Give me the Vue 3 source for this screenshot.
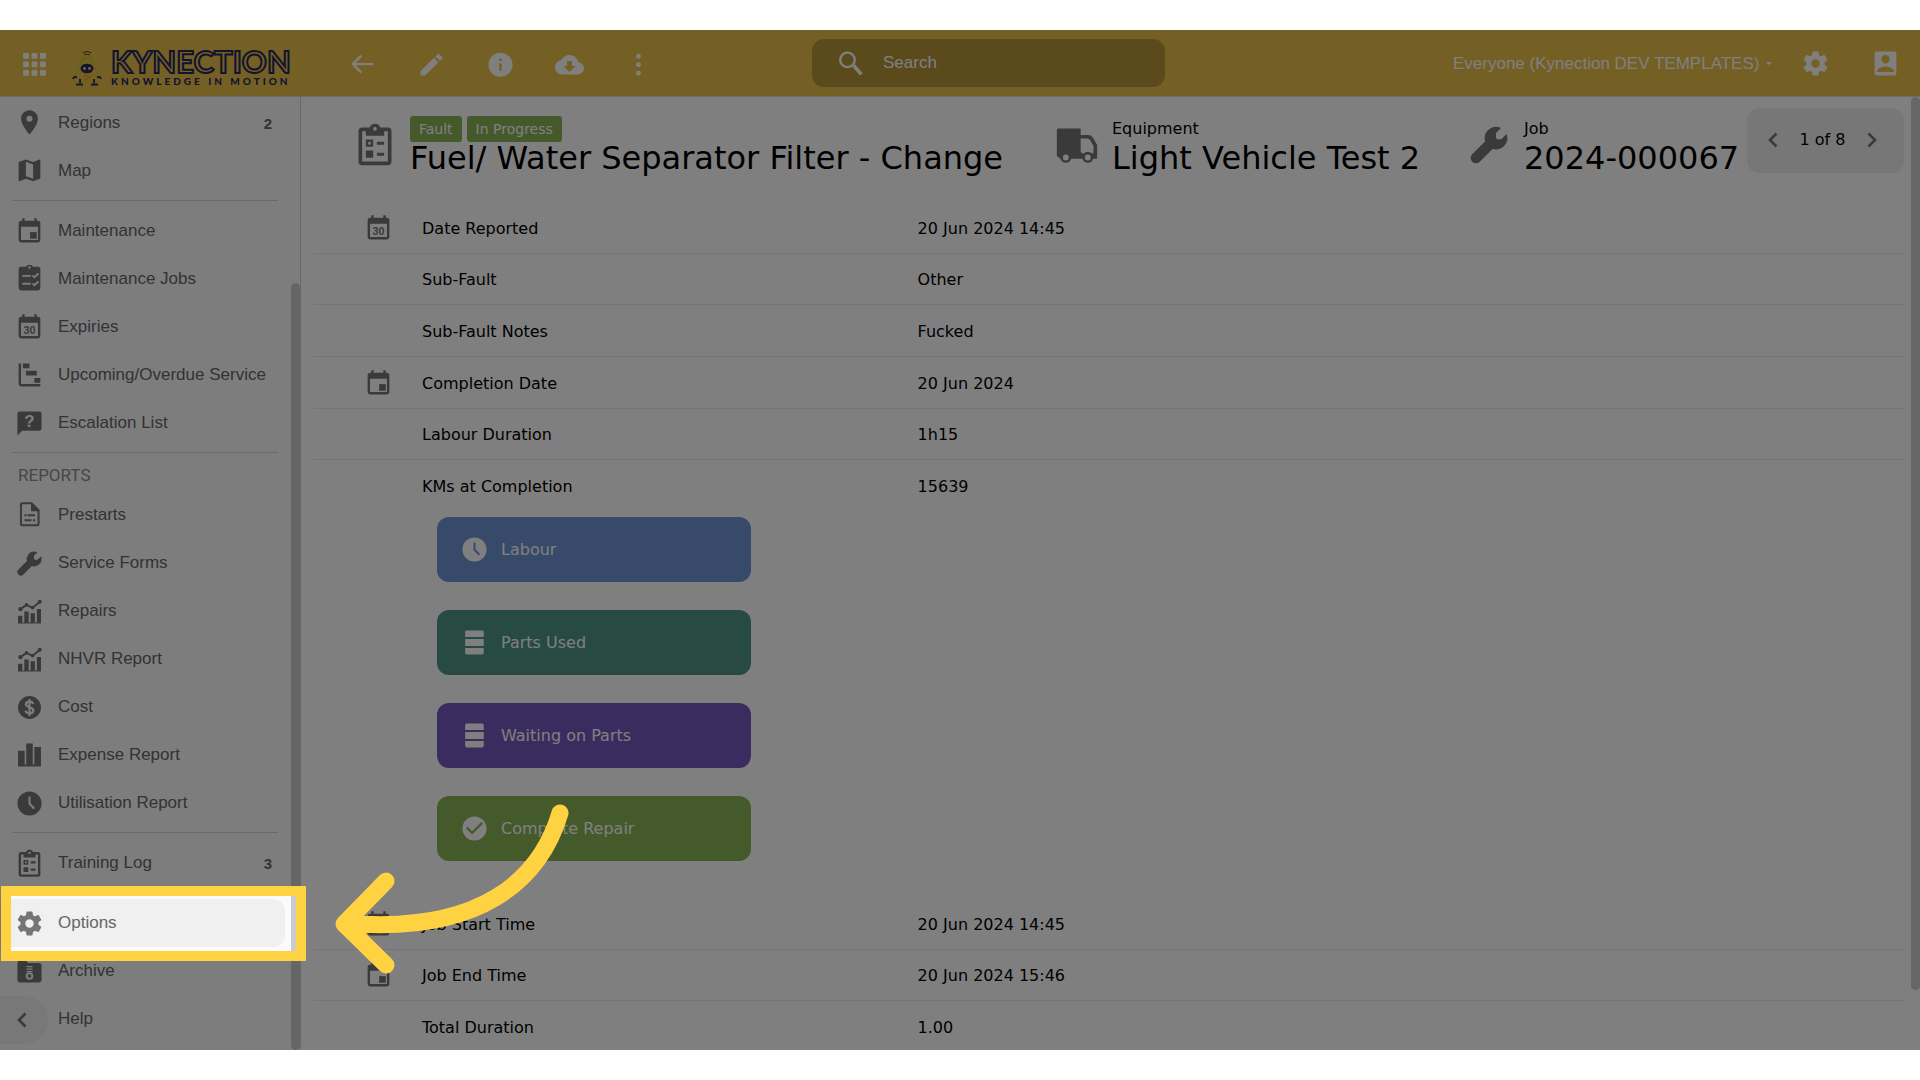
<script setup>
import { h } from 'vue'

const wrench = '<path d="M18.600 2.700A6.200 6.200 0 1 0 21.600 6l-3 2.900h-2.100l-.7-.7V5.400z"/><path d="M4.900 19.100 13 11" stroke="currentColor" stroke-width="5.800" stroke-linecap="round"/>'
const calendar = '<path fill-rule="evenodd" d="M6 1h2v2h8V1h2v2h1a2 2 0 0 1 2 2v14a2 2 0 0 1-2 2H5a2 2 0 0 1-2-2V5a2 2 0 0 1 2-2h1zM5 8v11h14V8z"/>'
const clipboard = '<path fill-rule="evenodd" d="M9 2.500a3.200 3.200 0 0 1 6 0h4a2 2 0 0 1 2 2V21a2 2 0 0 1-2 2H5a2 2 0 0 1-2-2V4.500a2 2 0 0 1 2-2zM5 4.500V21h14V4.500h-2V7H7V4.500zM12 2.200a1 1 0 1 0 0 2 1 1 0 0 0 0-2zM7 9h4v4H7zM8.300 10.300v1.400h1.400v-1.400zM13 10.200h4v1.700h-4zM7 15h4v4H7zM13 16.200h4v1.700h-4z"/>'
const chart = '<path d="M2.500 15.500h3.600V22H2.500zM7.700 12h3.600v10H7.700zM12.900 13.500h3.600V22h-3.600zM18.100 10h3.400v12h-3.400zM2.500 21h19v1h-19z"/><path d="M4.500 10 9.500 6.500l5 2.500 6-5" fill="none" stroke="currentColor" stroke-width="1.600"/><circle cx="4.500" cy="10" r="1.800"/><circle cx="9.500" cy="6.500" r="1.500"/><circle cx="14.500" cy="8.800" r="1.500"/><circle cx="20.500" cy="4" r="1.700"/>'
const clock = '<path fill-rule="evenodd" d="M12 0a12 12 0 1 0 0 24 12 12 0 0 0 0-24zM11 5h2v6.800l4.500 4.700-1.500 1.400-5-5.300z" transform="translate(2 2) scale(.833)"/>'
const gear = '<path d="M12 15.500a3.500 3.500 0 1 1 0-7 3.500 3.500 0 0 1 0 7m7.430-2.530c.04-.32.07-.64.07-.97s-.03-.66-.07-1l2.110-1.630c.19-.15.24-.42.12-.64l-2-3.460c-.12-.22-.39-.31-.61-.22l-2.490 1c-.52-.39-1.060-.73-1.690-.98l-.37-2.650A.506.506 0 0 0 14 2h-4c-.25 0-.46.18-.5.42l-.37 2.650c-.63.25-1.170.59-1.690.98l-2.490-1c-.22-.09-.49 0-.61.22l-2 3.460c-.13.22-.07.49.12.64L4.570 11c-.04.34-.07.67-.07 1s.03.65.07.97l-2.110 1.660c-.19.15-.25.42-.12.64l2 3.460c.12.22.39.3.61.22l2.490-1.010c.52.4 1.060.74 1.690.99l.37 2.650c.04.24.25.42.5.42h4c.25 0 .46-.18.5-.42l.37-2.650c.63-.26 1.170-.59 1.690-.99l2.490 1.010c.22.08.49 0 .61-.22l2-3.460c.12-.22.07-.49-.12-.64z"/>'

const icons = {
  wrench,
  clipboard,
  chart,
  clock,
  gear,
  pin: '<path d="M12 2C8.130 2 5 5.130 5 9c0 5.250 7 13 7 13s7-7.750 7-13c0-3.870-3.130-7-7-7zm0 9.500a2.500 2.500 0 1 1 0-5 2.500 2.500 0 0 1 0 5z" transform="translate(0 -1)"/>',
  map: '<path d="M20.500 3l-.16.03L15 5.100 9 3 3.360 4.900c-.21.07-.36.25-.36.48V20.500c0 .28.22.5.5.5l.16-.03L9 18.900l6 2.100 5.640-1.900c.21-.07.36-.25.36-.48V3.500c0-.28-.22-.5-.5-.5zM15 19l-6-2.110V5l6 2.110V19z" transform="translate(0 -1)"/>',
  event: calendar + '<path d="M12.500 12.500H18V18h-5.500z"/>',
  date: calendar + '<text x="12" y="17" text-anchor="middle" font-family="Liberation Sans, sans-serif" font-weight="700" font-size="9">30</text>',
  tasks: '<path fill-rule="evenodd" d="M9.200 2.500a3 3 0 0 1 5.600 0H19a2 2 0 0 1 2 2V20a2 2 0 0 1-2 2H5a2 2 0 0 1-2-2V4.500a2 2 0 0 1 2-2zM12 2a1 1 0 1 0 0 2 1 1 0 0 0 0-2zM6 9.200v1.600h7V9.200zM6 15.700v1.600h7v-1.600zM14 10.200l2 2 4-3.500-1-1.200-3 2.600-1-1zM14 16.700l2 2 4-3.500-1-1.200-3 2.600-1-1z" transform="translate(0 -1)"/>',
  gantt: '<path d="M3 2h2v17h16v2H5a2 2 0 0 1-2-2zM6.500 2H12v4H6.500zM9 8h9v4H9zM16 14h5v4h-5z"/>',
  question: '<path d="M4 2h16a2 2 0 0 1 2 2v12a2 2 0 0 1-2 2H6l-4 4V4a2 2 0 0 1 2-2z"/><text x="12" y="15" text-anchor="middle" font-family="Liberation Sans, sans-serif" font-weight="700" font-size="14" fill="#fbfbfd">?</text>',
  file: '<path fill-rule="evenodd" d="M4.500 0h10L22 7.500V22a2 2 0 0 1-2 2H4.500a2 2 0 0 1-2-2V2a2 2 0 0 1 2-2zM4.500 2v20H20V9h-6.500V2zM7 12h2v2H7zM10 12h7.500v2H10zM7 17h7v2H7zM15.500 17h2v2h-2z" transform="translate(2 1) scale(.833)"/>',
  dollar: '<circle cx="12" cy="12" r="9.500"/><path d="M15 9c-.4-1.200-1.500-1.800-3-1.800-1.800 0-3 .9-3 2.200 0 3.200 6.200 1.700 6.200 5 0 1.500-1.400 2.400-3.200 2.400-1.700 0-2.900-.8-3.300-2.100M12 5v14" fill="none" stroke="#fbfbfd" stroke-width="1.800"/>',
  bars: '<path d="M2.500 9H8v13H2.500zM9.300 3h5.400v19H9.300zM16 6h5.500v16H16zM2.500 20.500h19V22h-19z" transform="translate(0 -1)"/>',
  archive: '<path d="M4 3h5l2 2h9a2 2 0 0 1 2 2v12a2 2 0 0 1-2 2H4a2 2 0 0 1-2-2V5a2 2 0 0 1 2-2z"/><path d="M9.500 8h5M9.500 10h5M9.500 12h5" stroke="#fbfbfd" stroke-width="1"/><circle cx="12" cy="15.800" r="2.300" fill="none" stroke="#fbfbfd" stroke-width="1.600"/>',
  truck: '<path fill-rule="evenodd" d="M1.500 3H14v3.500h4c1.300 0 2 .4 2.700 1.500L23 12v7.500h-2.200a3 3 0 0 1-5.800 0H8.800a3 3 0 0 1-5.800 0L1 18V4zM14 8.500v7.300l1.500 1a3 3 0 0 1 4.700 0l.8-.8v-3.500L19 9.200l-1.200-.7zM5.900 17.200a1.600 1.600 0 1 0 0 3.200 1.600 1.600 0 0 0 0-3.200zM17.900 17.200a1.600 1.600 0 1 0 0 3.200 1.600 1.600 0 0 0 0-3.200z"/>',
  apps: '<path d="M3 3h4v4H3zM10 3h4v4h-4zM17 3h4v4h-4zM3 10h4v4H3zM10 10h4v4h-4zM17 10h4v4h-4zM3 17h4v4H3zM10 17h4v4h-4zM17 17h4v4h-4z" stroke="currentColor" stroke-width=".8" stroke-linejoin="round" transform="translate(0 .7)"/>',
  back: '<path d="M21 12.500H4M11 5.500l-7 7 7 7" fill="none" stroke="currentColor" stroke-width="2"/>',
  pencil: '<path d="M3 17.250V21h3.750L17.810 9.940l-3.750-3.750L3 17.250zM20.710 7.040a1 1 0 0 0 0-1.410l-2.340-2.340a1 1 0 0 0-1.410 0l-1.830 1.830 3.750 3.750z" transform="translate(0 1)"/>',
  info: '<path fill-rule="evenodd" d="M12 2a10 10 0 1 0 0 20 10 10 0 0 0 0-20zM11 7h2v2h-2zM11 11h2v6h-2z" transform="translate(0 1)"/>',
  cloud: '<path d="M19.350 10.040A7.490 7.490 0 0 0 12 4C9.110 4 6.600 5.640 5.350 8.040A5.994 5.994 0 0 0 0 14c0 3.310 2.690 6 6 6h13c2.760 0 5-2.240 5-5 0-2.640-2.050-4.780-4.650-4.960zM17 13l-5 5-5-5h3V9h4v4z" transform="translate(0 1)"/>',
  dots: '<circle cx="12" cy="6" r="2"/><circle cx="12" cy="13" r="2"/><circle cx="12" cy="20" r="2"/>',
  search: '<circle cx="9.500" cy="9" r="6" fill="none" stroke="currentColor" stroke-width="2"/><path d="M14.500 13.500l6.500 7.500" stroke="currentColor" stroke-width="3"/>',
  account: '<path fill-rule="evenodd" d="M5 2h14a2 2 0 0 1 2 2v16a2 2 0 0 1-2 2H5a2 2 0 0 1-2-2V4a2 2 0 0 1 2-2zM12 5a3.500 3.500 0 1 0 0 7 3.500 3.500 0 0 0 0-7zM5 18.500V19h14v-.5c0-2.400-4.600-4-7-4s-7 1.600-7 4z"/>',
  left: '<path d="M15.500 5.500 9 12l6.500 6.500" fill="none" stroke="currentColor" stroke-width="2.600"/>',
  right: '<path d="M8.500 5.500 15 12l-6.500 6.500" fill="none" stroke="currentColor" stroke-width="2.600"/>',
  stack: '<path d="M3.700 0h14.600A1.700 1.700 0 0 1 20 1.700V6.500H1.500V1.700A1.700 1.700 0 0 1 3.700 0zM1.500 8.500H20v7H1.500zM1.500 17.500H20v4.800a1.700 1.700 0 0 1-1.700 1.700H3.200a1.700 1.700 0 0 1-1.700-1.700z" transform="translate(3 2) scale(.833)"/>',
  check: '<path fill-rule="evenodd" d="M12 2a10 10 0 1 0 0 20 10 10 0 0 0 0-20zM10 17l-5-5 1.400-1.400 3.600 3.600 7.600-7.600L19 8z"/>',
}

const Icon = (props) =>
  h('svg', { class: 'icon', viewBox: '0 0 24 24', 'aria-hidden': 'true', innerHTML: icons[props.name] })
Icon.props = ['name']

const groups = [
  { items: [{ icon: 'pin', label: 'Regions', count: 2 }, { icon: 'map', label: 'Map' }] },
  {
    items: [
      { icon: 'event', label: 'Maintenance' },
      { icon: 'tasks', label: 'Maintenance Jobs' },
      { icon: 'date', label: 'Expiries' },
      { icon: 'gantt', label: 'Upcoming/Overdue Service' },
      { icon: 'question', label: 'Escalation List' },
    ],
  },
  {
    title: 'REPORTS',
    items: [
      { icon: 'file', label: 'Prestarts' },
      { icon: 'wrench', label: 'Service Forms' },
      { icon: 'chart', label: 'Repairs' },
      { icon: 'chart', label: 'NHVR Report' },
      { icon: 'dollar', label: 'Cost' },
      { icon: 'bars', label: 'Expense Report' },
      { icon: 'clock', label: 'Utilisation Report' },
    ],
  },
  { items: [{ icon: 'clipboard', label: 'Training Log', count: 3 }] },
  {
    items: [
      { icon: 'gear', label: 'Options', active: true },
      { icon: 'archive', label: 'Archive' },
      { label: 'Help' },
    ],
  },
]

const tools = [
  { icon: 'back', label: 'Back' },
  { icon: 'pencil', label: 'Edit' },
  { icon: 'info', label: 'Info' },
  { icon: 'cloud', label: 'Download' },
  { icon: 'dots', label: 'More' },
]

const details = [
  { icon: 'date', label: 'Date Reported', value: '20 Jun 2024 14:45' },
  { label: 'Sub-Fault', value: 'Other' },
  { label: 'Sub-Fault Notes', value: 'Fucked' },
  { icon: 'event', label: 'Completion Date', value: '20 Jun 2024' },
  { label: 'Labour Duration', value: '1h15' },
  { label: 'KMs at Completion', value: '15639' },
]

const times = [
  { icon: 'event', label: 'Job Start Time', value: '20 Jun 2024 14:45' },
  { icon: 'event', label: 'Job End Time', value: '20 Jun 2024 15:46' },
  { label: 'Total Duration', value: '1.00' },
]

const actions = [
  { icon: 'clock', label: 'Labour', tone: 'blue' },
  { icon: 'stack', label: 'Parts Used', tone: 'teal' },
  { icon: 'stack', label: 'Waiting on Parts', tone: 'purple' },
  { icon: 'check', label: 'Complete Repair', tone: 'green' },
]
</script>

<template>
  <div class="app">
    <header class="topbar">
      <button class="tool apps" aria-label="Apps"><Icon name="apps" /></button>
      <a class="brand" href="#">
        <svg class="robot" viewBox="0 0 30 36" aria-hidden="true">
          <path d="M11 3q4-3 8 0M12.500 5q2.500-2 5 0" fill="none" stroke="#4a4a3c" stroke-width="1.200" />
          <path d="M8 6l5 1.500M22 6l-5 1.500" stroke="#f0b838" stroke-width="1.500" />
          <path d="M8 17a7 8 0 0 1 14 0l3 7-4 7H9l-4-7z" fill="#ecc040" />
          <path d="M8 15q1-6 7-7 6 1 7 7" fill="none" stroke="#b8c83c" stroke-width="2" />
          <path d="M7 18l-4 8M23 18l4 8" stroke="#b8c83c" stroke-width="1.500" />
          <ellipse cx="15" cy="18.500" rx="6.500" ry="4.800" fill="#252860" />
          <circle cx="12.500" cy="18.500" r="1.400" fill="#e8d070" />
          <circle cx="17.500" cy="18.500" r="1.400" fill="#e8d070" />
          <path d="M12 25l6 2-5 3" fill="none" stroke="#e4a038" stroke-width="1.500" />
          <path d="M1 29q1-3 4-1.500M29 29q-1-3-4-1.500M8 29v4M22 29v4M4 34.500h7M19 34.500h7" fill="none" stroke="#252860" stroke-width="1.800" />
        </svg>
        <span class="wordmark">
          <span class="name">KYNECTION</span>
          <span class="tagline">KNOWLEDGE IN MOTION</span>
        </span>
      </a>
      <div class="tools">
        <button v-for="t in tools" :key="t.label" class="tool" :aria-label="t.label"><Icon :name="t.icon" /></button>
      </div>
      <label class="search">
        <Icon name="search" />
        <input type="search" placeholder="Search" aria-label="Search" />
      </label>
      <div class="account">
        <label class="scope">
          <select aria-label="Group">
            <option>Everyone (Kynection DEV TEMPLATES)</option>
          </select>
          <span class="caret"></span>
        </label>
        <div class="account-tools">
          <button class="tool" aria-label="Settings"><Icon name="gear" /></button>
          <button class="tool" aria-label="Profile"><Icon name="account" /></button>
        </div>
      </div>
    </header>

    <div class="body">
      <nav class="sidebar">
        <section v-for="(g, i) in groups" :key="i" class="group">
          <h2 v-if="g.title">{{ g.title }}</h2>
          <a v-for="item in g.items" :key="item.label" href="#" class="item" :class="{ active: item.active }">
            <Icon v-if="item.icon" :name="item.icon" />
            <span v-else class="icon"></span>
            <span>{{ item.label }}</span>
            <b v-if="item.count">{{ item.count }}</b>
            <span v-if="item.active" class="spotlight"></span>
          </a>
        </section>
        <button class="collapse" aria-label="Collapse menu"><Icon name="left" /></button>
        <span class="thumb"></span>
      </nav>

      <main class="main">
        <div class="summary">
          <div class="fact">
            <Icon name="clipboard" />
            <div>
              <p class="badges"><span>Fault</span><span>In Progress</span></p>
              <h1>Fuel/ Water Separator Filter - Change</h1>
            </div>
          </div>
          <div class="fact">
            <Icon name="truck" />
            <div>
              <p>Equipment</p>
              <h1>Light Vehicle Test 2</h1>
            </div>
          </div>
          <div class="fact">
            <Icon name="wrench" />
            <div>
              <p>Job</p>
              <h1>2024-000067</h1>
            </div>
          </div>
          <div class="pager">
            <button aria-label="Previous"><Icon name="left" /></button>
            <span>1 of 8</span>
            <button aria-label="Next"><Icon name="right" /></button>
          </div>
        </div>

        <table class="details six">
          <tbody>
            <tr v-for="r in details" :key="r.label">
              <td class="mark"><Icon v-if="r.icon" :name="r.icon" /></td>
              <th scope="row">{{ r.label }}</th>
              <td class="value">{{ r.value }}</td>
            </tr>
          </tbody>
        </table>

        <div class="actions">
          <button v-for="a in actions" :key="a.label" :class="a.tone"><Icon :name="a.icon" />{{ a.label }}</button>
        </div>

        <table class="details three">
          <tbody>
            <tr v-for="r in times" :key="r.label">
              <td class="mark"><Icon v-if="r.icon" :name="r.icon" /></td>
              <th scope="row">{{ r.label }}</th>
              <td class="value">{{ r.value }}</td>
            </tr>
          </tbody>
        </table>
        <span class="thumb"></span>
      </main>
    </div>

    <svg class="pointer" viewBox="0 0 240 180" aria-hidden="true">
      <path d="M230 19C210 86 150 141 15 129M56 87 14 130 56 171" />
    </svg>
  </div>
</template>

<style>
body {
  margin: 0;
  background: #fff;
}
</style>

<style scoped>
.app {
  position: relative;
  display: flex;
  flex-direction: column;
  height: calc(100vh - 60px);
  margin: 30px 0;
  overflow: hidden;
  background: #fff;
  font-family: "Liberation Sans", Arial, sans-serif;
  font-size: 17px;
}
button,
input,
select {
  padding: 0;
  border: 0;
  background: none;
  color: inherit;
  font: inherit;
}
.icon {
  display: block;
  flex: none;
  width: 29px;
  height: 29px;
  fill: currentColor;
}
h1,
h2,
p {
  margin: 0;
  font-weight: 400;
}
a {
  color: inherit;
  text-decoration: none;
}

.topbar {
  display: grid;
  grid-template-columns: 72px 269px 471px minmax(200px, 353px) 1fr;
  align-items: center;
  flex: none;
  height: 66px;
  border-bottom: 1px solid #d8d8d8;
  background: #e8c048;
  color: #fff;
}
.tool.apps {
  margin-left: 20px;
}
.brand {
  display: flex;
  align-items: flex-end;
  gap: 9px;
  padding-top: 8px;
  color: #252860;
}
.robot {
  width: 30px;
  height: 38px;
}
.wordmark {
  display: flex;
  flex-direction: column;
  font-family: Lato, sans-serif;
  white-space: nowrap;
}
.name {
  color: #e8c048;
  font-size: 31px;
  font-weight: 700;
  line-height: 28px;
  -webkit-text-stroke: 2px #252860;
}
.tagline {
  font-size: 10px;
  font-weight: 900;
  line-height: 12px;
  letter-spacing: 3px;
}
.tools {
  display: flex;
  gap: 40px;
  padding-left: 7px;
}
.search {
  display: flex;
  align-items: center;
  gap: 18px;
  box-sizing: border-box;
  height: 48px;
  padding: 0 24px;
  border-radius: 12px;
  background: #b69638;
}
.search input {
  flex: 1;
  min-width: 0;
  outline: 0;
}
.search input::placeholder {
  color: #fff;
  opacity: 1;
}
.account {
  display: flex;
  align-items: center;
  justify-content: flex-end;
  gap: 29px;
  padding-right: 20px;
}
.account-tools {
  display: flex;
  gap: 41px;
}
.scope {
  display: flex;
  align-items: center;
  gap: 6px;
}
.scope select {
  appearance: none;
}
.caret {
  border: 3px solid transparent;
  border-top-color: #fff;
  border-bottom: 0;
}

.body {
  display: flex;
  flex: 1;
  min-height: 0;
}
.sidebar {
  position: relative;
  flex: none;
  width: 300px;
  padding-top: 2px;
  border-right: 1px solid #d0d0d0;
  background: #fbfbfd;
  color: #666;
}
.group + .group::before {
  content: "";
  display: block;
  height: 1px;
  margin: 5px 22px 6px 12px;
  background: #d4d4d4;
}
.group h2 {
  padding-left: 18px;
  color: #8c8c8c;
  font-family: Roboto, sans-serif;
  font-size: 17px;
  line-height: 32px;
}
.item {
  position: relative;
  display: flex;
  align-items: center;
  gap: 14px;
  box-sizing: border-box;
  width: 285px;
  height: 48px;
  padding: 0 13px 0 15px;
}
.item .icon {
  color: #757575;
}
.item b {
  margin-left: auto;
  font-size: 15px;
}
.item.active {
  border-radius: 0 12px 12px 0;
  background: #f0f0f0;
}
.spotlight {
  position: absolute;
  z-index: 5;
  top: -13px;
  left: 1px;
  width: 285px;
  height: 55px;
  border: 10px solid #ffd242;
  box-shadow: 0 0 0 4000px rgba(0, 0, 0, 0.5);
}
.collapse {
  position: absolute;
  bottom: 6px;
  left: 0;
  width: 48px;
  height: 48px;
  padding-left: 10px;
  border-radius: 0 24px 24px 0;
  background: #f0f0f0;
  color: #757575;
}
.collapse .icon,
.pager .icon {
  width: 24px;
  height: 24px;
}
.thumb {
  position: absolute;
  right: 0;
  width: 9px;
  border-radius: 5px;
  background: #ccc;
}
.sidebar .thumb {
  top: 186px;
  bottom: 0;
}

.main {
  position: relative;
  flex: 1;
  min-width: 0;
  padding: 0 16px 0 12px;
  color: #000;
  font-family: Verdana, "DejaVu Sans", sans-serif;
  font-size: 16px;
}
.main > .thumb {
  top: 0;
  bottom: 60px;
}
.summary {
  display: grid;
  grid-template-columns: 702fr 412fr 280fr 157px;
  height: 94px;
  padding: 11px 0 0 40px;
}
.fact {
  display: flex;
  align-items: flex-start;
  gap: 13px;
  min-width: 0;
  padding-top: 8px;
  white-space: nowrap;
}
.fact .icon {
  width: 44px;
  height: 44px;
  margin-top: 7px;
  color: #757575;
}
.fact p {
  line-height: 26px;
}
.fact h1 {
  font-size: 32px;
  line-height: 32px;
}
.fact .badges {
  display: flex;
  gap: 5px;
  color: #fff;
  font-size: 14px;
}
.badges span {
  padding: 0 9px;
  border-radius: 3px;
  background: #88b456;
}
.pager {
  display: flex;
  align-items: center;
  justify-content: space-between;
  box-sizing: border-box;
  height: 65px;
  padding: 0 20px 2px 14px;
  border-radius: 12px;
  background: #efefef;
}
.pager .icon {
  color: #757575;
}

.details {
  width: 100%;
  border-collapse: separate;
  border-spacing: 0;
  table-layout: fixed;
}
.six {
  height: 310px;
}
.three {
  height: 155px;
}
.details td,
.details th {
  height: 48px;
  padding: 2px 0 0;
  border-bottom: 1px solid #eaeaea;
  font-weight: 400;
  text-align: left;
}
.details tr:last-child > * {
  border-bottom-color: transparent;
}
.details .mark {
  width: 109px;
  color: #757575;
}
.details .mark .icon {
  margin-left: 51px;
}
.details .value {
  width: 62%;
}
.actions {
  display: flex;
  flex-direction: column;
  gap: 28px;
  padding: 5px 0 37px 124px;
}
.actions button {
  display: flex;
  align-items: center;
  gap: 12px;
  width: 314px;
  height: 65px;
  padding-left: 23px;
  border-radius: 12px;
  color: #fff;
}
.blue {
  background: #7094d4;
}
.teal {
  background: #4e9486;
}
.purple {
  background: #7658be;
}
.green {
  background: #88b456;
}

.pointer {
  position: absolute;
  z-index: 6;
  top: 764px;
  left: 330px;
  width: 240px;
  height: 180px;
  fill: none;
  stroke: #ffd242;
  stroke-width: 17px;
  stroke-linecap: round;
  stroke-linejoin: round;
}
</style>
